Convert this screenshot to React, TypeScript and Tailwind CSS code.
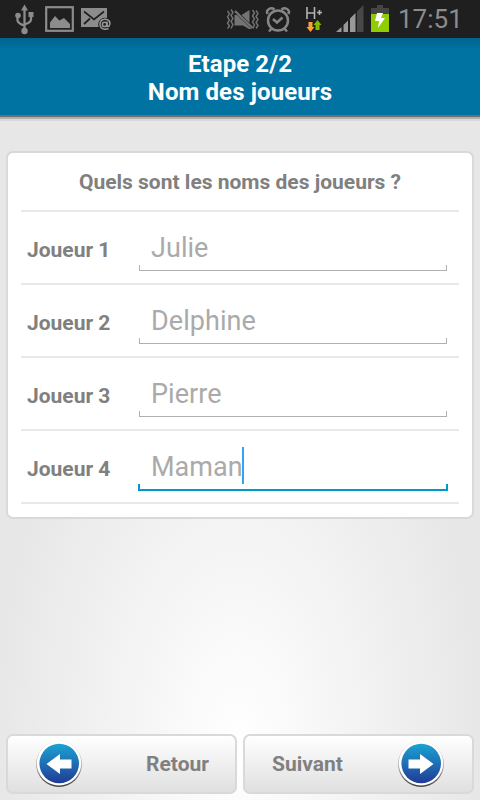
import React from "react";

const players = ["Julie", "Delphine", "Pierre", "Maman"];

function StatusBar() {
  return (
    <div className="relative h-[38px] w-full shrink-0 bg-[#1f1f1f]">
      <svg width="480" height="38" viewBox="0 0 480 38" className="block">
        <g stroke="#8c8c8c" fill="none" strokeWidth="2.300">
          <path d="M24.5 9V31M17.5 16V20.500Q18 23.500 24.5 25.500M31 15V19.500Q31 22.500 24.5 24.500" />
        </g>
        <g fill="#8c8c8c">
          <path d="M24.5 4.500L28 10.500H21Z" />
          <circle cx="18" cy="15.500" r="2.800" />
          <rect x="28.500" y="12" width="5" height="5" />
          <circle cx="24.500" cy="31" r="3.200" />
          <path d="M50 28V22.500L55 16L59.500 20.500L64 18L70 24V28Z" />
        </g>
        <rect x="46.200" y="7.200" width="26.600" height="23.600" fill="none" stroke="#8c8c8c" strokeWidth="2.200" />
        <rect x="81" y="8" width="26" height="19" fill="#8c8c8c" />
        <path d="M84 11.500L94 19.500L104 11.500M84 24L90 18.500" fill="none" stroke="#1f1f1f" strokeWidth="1.700" />
        <circle cx="105" cy="24.500" r="6.800" fill="#1f1f1f" />
        <g fill="none" stroke="#9a9a9a" strokeWidth="1.500">
          <circle cx="104.600" cy="24.400" r="2.200" />
          <path d="M107 21.500V25.500Q107.500 27 108.800 26.300Q111 23.500 109 20.800Q107 18.700 104 19.300Q100 20 100 24.500Q100.500 29 105 29.300L108.500 28.700" />
        </g>
        <g fill="#747474">
          <path d="M234.500 15H237L251.500 29H249L243 25.500H234.500Z" />
          <path d="M249.500 10V23L241.500 15Z" />
        </g>
        <g fill="none" stroke="#747474">
          <path d="M235 11L252.500 28" strokeWidth="2.200" />
          <path d="M227.500 11L229.500 13.500L227.500 17L229.500 20L227.500 23L229.500 26L227.500 28.500M231 9.500L233 12.500L231 15.500L233 18.500L231 21.500L233 24.500L231 28.500M252.500 10L254.500 13L252.500 16L254.500 19L252.500 22L254.500 25L253 28.500M256 10.500L258 13.500L256 16.500L258 19.500L256 22.500L258 25.500L256 28.500" strokeWidth="1.400" />
        </g>
        <g fill="none" stroke="#858585" strokeWidth="2.500">
          <circle cx="278" cy="20.500" r="10" />
          <path d="M273 19L277 22.500L282.500 17.500M272 28L269 31.500M284 28L287 31.500" />
          <path d="M267.500 14Q266 10.500 269 9Q272 7.500 274.500 9.500M288.500 14Q290 10.500 287 9Q284 7.500 281.500 9.500" />
        </g>
        <path d="M307 7V19M314.500 7V19M307 13H314.500M317 12.500H322M319.500 10V15" fill="none" stroke="#b3b3b3" strokeWidth="1.600" />
        <path d="M308.500 22H312.500V27H314.500L310.500 32L306.500 27H308.500Z" fill="#ffa033" />
        <path d="M315.500 30H319.500V25H321.500L317.500 20L313.500 25H315.500Z" fill="#80bd00" />
        <path d="M336 32L341.500 27V32ZM343.500 32V25L348 20.500V32ZM350 32V18.500L355.500 13V32Z" fill="#999" />
        <path d="M357 32V11.500L363.500 5V32Z" fill="#484848" />
        <rect x="377" y="5" width="6" height="3" fill="#454545" />
        <rect x="371" y="8" width="18" height="6" fill="#454545" />
        <rect x="371" y="14" width="18" height="18" fill="#8fce00" />
        <path d="M377 13H383L381 18H385L378 28L379 21H375Z" fill="#fff" />
      </svg>
      <span className="absolute left-[398px] top-[3px] text-[26px] leading-[32px] text-[#8c8c8c]">17:51</span>
    </div>
  );
}

function PlayerRow({ name, index }: { name: string; index: number }) {
  const active = index === 3;
  return (
    <div className="flex h-[73px] border-b-2 border-[#e8e8e8] pl-[6px]">
      <label className="w-[112px] pt-[25px] text-[21px] leading-[26px] font-bold text-[#808080]">Joueur {index + 1}</label>
      <div className="relative h-[59px] w-[308px] pt-[18px] pl-[12px] text-[27px] leading-[36px] tracking-[0.05px] text-[#aaaaaa]">
        {name}
        {active && <span className="absolute top-[16px] left-[103px] h-[37px] w-[2px] bg-[#33a5f5]" />}
        <span
          className={
            active
              ? "absolute top-[53px] -left-px h-[7px] w-[310px] border-x-2 border-b-2 border-[#0099cc]"
              : "absolute top-[53px] left-0 h-[6px] w-[308px] border-x border-b border-[#b0b0b0]"
          }
        />
      </div>
    </div>
  );
}

function ArrowDisc({ id, flip }: { id: string; flip?: boolean }) {
  return (
    <svg width="48" height="48" viewBox="0 0 48 48" className="shrink-0">
      <defs>
        <linearGradient id={id} x1="0" y1="0" x2="0" y2="1">
          <stop offset="0" stopColor="#1ba3d3" />
          <stop offset="1" stopColor="#213b96" />
        </linearGradient>
        <linearGradient id={id + "rim"} x1="0" y1="0" x2="0" y2="1">
          <stop offset="0" stopColor="#e8e8e8" />
          <stop offset="0.500" stopColor="#aaa" />
          <stop offset="1" stopColor="#444" />
        </linearGradient>
      </defs>
      <circle cx="24" cy="24" r="22.900" fill={"url(#" + id + "rim)"} />
      <circle cx="24" cy="23.300" r="22.200" fill="#fff" />
      <circle cx="24.200" cy="23.500" r="19.800" fill={"url(#" + id + ")"} />
      <path d="M11.500 24L25 14V19.500H36.500V28.500H25V34Z" fill="#fff" transform={flip ? "translate(48 0) scale(-1 1)" : undefined} />
    </svg>
  );
}

const buttonClass =
  "flex h-[60px] w-[231px] items-center rounded-[7px] border-2 border-[#d9d9d9] bg-linear-to-b from-white to-[#e0e0e0] text-[21px] leading-[26px] font-bold text-[#808080]";

export default function App() {
  return (
    <div className="flex h-[800px] w-[480px] flex-col overflow-hidden bg-[#e6e6e6] bg-[radial-gradient(ellipse_245px_460px_at_238px_745px,#ffffff,#e7e7e7)] font-[Roboto,sans-serif]">
      <StatusBar />
      <header className="h-[77px] shrink-0 bg-linear-to-b from-[#00658f] via-[#0073a3] via-15% to-[#0073a3] pt-[12px] text-center text-[24px] leading-[28px] font-bold tracking-[0.1px] text-white">
        <h1>Etape 2/2<br />Nom des joueurs</h1>
      </header>
      <div className="h-[2px] shrink-0 bg-[#6e6e6e]" />
      <div className="h-[2px] shrink-0 bg-[#b0b0b0]" />
      <div className="h-[2px] shrink-0 bg-[#d9d9d9]" />
      <main className="mx-[6px] mt-[30px] h-[368px] shrink-0 rounded-[7px] border-2 border-[#d9d9d9] bg-white px-[13px]">
        <h2 className="h-[59px] border-b-2 border-[#e8e8e8] pt-[16px] text-center text-[21px] leading-[26px] font-bold text-[#808080]">Quels sont les noms des joueurs ?</h2>
        {players.map((name, i) => <PlayerRow key={name} name={name} index={i} />)}
      </main>
      <footer className="mx-[6px] mt-auto mb-[6px] flex justify-between">
        <button className={buttonClass + " pl-[27px]"}>
          <ArrowDisc id="back" />
          <span className="ml-[63px]">Retour</span>
        </button>
        <button className={buttonClass + " justify-between pr-[27px] pl-[27px]"}>
          <span>Suivant</span>
          <ArrowDisc id="next" flip />
        </button>
      </footer>
    </div>
  );
}
